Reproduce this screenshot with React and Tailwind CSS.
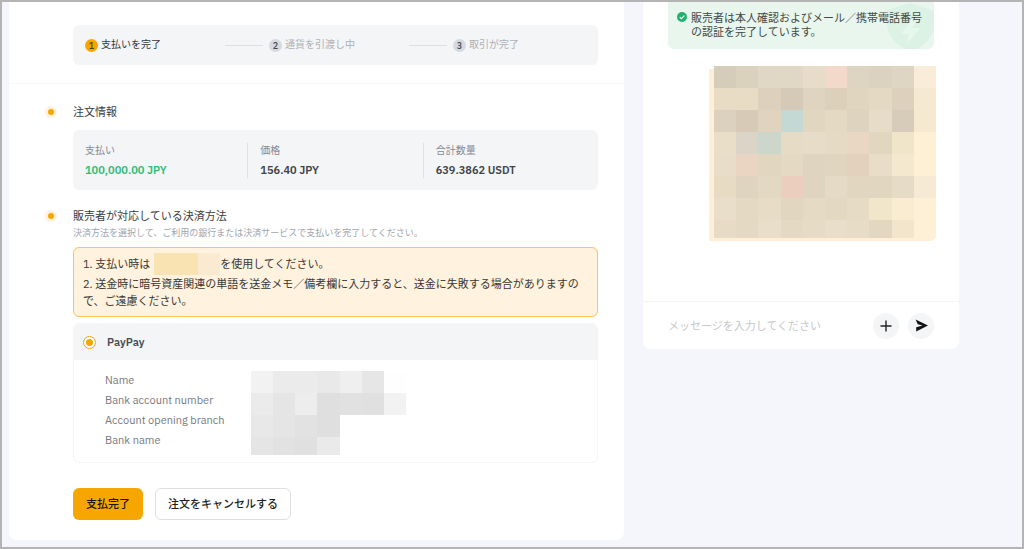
import React from 'react';

const steps = [
  { n: 1, label: '支払いを完了', active: true },
  { n: 2, label: '通貨を引渡し中' },
  { n: 3, label: '取引が完了' },
];

const amounts = [
  { label: '支払い', value: '100,000.00 JPY', tone: 'text-[#2fbd78]' },
  { label: '価格', value: '156.40 JPY', tone: 'text-[#404246]' },
  { label: '合計数量', value: '639.3862 USDT', tone: 'text-[#404246]' },
];

const qrMosaic = [
  ['#d6ccba', '#dbd2be', '#e0d7c4', '#e0d8c5', '#e7dcc8', '#f3d9c9', '#ddd4c1', '#dcd3bf', '#ded5c2', '#f9edda'],
  ['#e8dcc4', '#e8dcc4', '#ddd1bd', '#d5c9b7', '#dfd4c0', '#ddd0bb', '#e0d5be', '#e4d9c2', '#ddd1be', '#f5e9d2'],
  ['#dcd1be', '#d7cbb8', '#e0d4be', '#c4d9d4', '#e1d6c0', '#e4d9c3', '#ddd3be', '#e7dcc7', '#d7cbb9', '#f5e9d2'],
  ['#e9dec7', '#dcd5c7', '#ccd6cb', '#e6dbc4', '#e7dcc7', '#e5dac4', '#e9d6c3', '#e1d7c1', '#f0e4c9', '#fef0d5'],
  ['#e8ddc8', '#ead5c3', '#e1d6bf', '#e4dac3', '#ded4c0', '#e0d6c0', '#e3d0bd', '#e9ddc8', '#f4e8ce', '#fef0d5'],
  ['#e7dbc4', '#dfd4c0', '#e3d8c2', '#ebcebe', '#dfd4c0', '#e5dac5', '#e1d6c0', '#e1d7c1', '#e6dbc6', '#f6ead5'],
  ['#e9dec9', '#e4dac4', '#e7dcc5', '#e1d7c0', '#e5dac3', '#e3d9c2', '#e6dbc5', '#f1e5ca', '#f9ecd0', '#fef0d7'],
  ['#e7dbc5', '#e4dac3', '#e9dec9', '#e4d9c3', '#e6dbc5', '#e9dec9', '#e7dcc5', '#e3d7c2', '#f3e5cc', '#fef0d7'],
];

const accountMosaic = [
  ['#f2f2f2', '#ebebeb', '#ebebeb', '#e9e9e9', '#efefef', '#e6e6e6', '#fefefe'],
  ['#ebebeb', '#e5e5e5', '#ededed', '#dfdfdf', '#e1e1e1', '#e0e0e0', '#f2f2f2'],
  ['#e8e8e8', '#e5e5e5', '#e2e2e2', '#dfdfdf', '#ffffff', '#ffffff', '#ffffff'],
  ['#e5e5e5', '#e2e2e2', '#e0e0e0', '#eaeaea', '#ffffff', '#ffffff', '#ffffff'],
];

function Mosaic({ rows, className }) {
  return (
    <div className={`flex flex-col ${className}`} aria-hidden="true">
      {rows.map((row, y) => (
        <div key={y} className={y < rows.length - 1 ? 'flex h-[22px]' : 'flex h-[18px]'}>
          {row.map((color, x) => (
            <span key={x} className="flex-1" style={{ backgroundColor: color }} />
          ))}
        </div>
      ))}
    </div>
  );
}

function Dot() {
  return (
    <span className="grid size-3 shrink-0 place-items-center rounded-full bg-[#fff1d9]">
      <span className="size-[6px] rounded-full bg-[#f7a600]" />
    </span>
  );
}

function SectionTitle({ children }) {
  return (
    <div className="flex items-center gap-4">
      <Dot />
      <h2 className="text-[11px] leading-4 text-[#3a3c40]">{children}</h2>
    </div>
  );
}

function Steps() {
  return (
    <ol className="flex h-10 items-center rounded-md bg-[#f3f5f7] px-3">
      {steps.map((s, i) => (
        <li key={s.n} className={i < 2 ? 'flex flex-[184] items-center' : 'flex flex-[133] items-center'}>
          <span
            className={
              s.active
                ? 'grid size-[13px] place-items-center rounded-full bg-[#f7a600] text-[9px] leading-none font-medium text-[#54400f]'
                : 'grid size-[13px] place-items-center rounded-full bg-[#d5dae0] text-[9px] leading-none font-medium text-[#44474d]'
            }
          >
            {s.n}
          </span>
          <span
            className={
              s.active
                ? 'ml-[3px] flex-1 text-[10px] leading-4 whitespace-nowrap text-[#36383c]'
                : 'ml-[3px] flex-1 text-[10px] leading-4 whitespace-nowrap text-[#adb1b8]'
            }
          >
            {s.label}
          </span>
          {i < 2 && <span className="mr-[6px] h-px w-[38px] bg-[#dcdfe3]" />}
        </li>
      ))}
    </ol>
  );
}

function OrderPanel() {
  return (
    <main className="rounded-b-lg bg-white pb-5">
      <div className="border-b border-[#f5f6f7] pt-[23px] pr-[26px] pb-[18px] pl-16">
        <Steps />
      </div>

      <section className="pt-5 pr-[26px] pl-9">
        <SectionTitle>注文情報</SectionTitle>
        <dl className="mt-[10px] ml-7 flex h-[60px] items-center rounded-md bg-[#f3f5f7]">
          {amounts.map((a, i) => (
            <div key={a.label} className={i ? 'flex-1 border-l border-[#dfe1e5] pl-3' : 'flex-1 pl-3'}>
              <dt className="text-[10px] leading-4 text-[#868a93]">{a.label}</dt>
              <dd className={`pt-[3px] text-[11px] leading-4 font-semibold ${a.tone}`}>{a.value}</dd>
            </div>
          ))}
        </dl>
      </section>

      <section className="pt-[18px] pr-[26px] pl-9">
        <SectionTitle>販売者が対応している決済方法</SectionTitle>
        <div className="ml-7">
          <p className="text-[9px] leading-[18px] text-[#a0a4ad]">
            決済方法を選択して、ご利用の銀行または決済サービスで支払いを完了してください。
          </p>
          <ol className="mt-[5px] rounded-md border border-[#f9c45c] bg-[#fff2de] px-[9px] pt-[5px] pb-[6px] text-[11px] leading-[17px] text-[#3a3732]">
            <li className="mb-px flex h-[22px] items-center">
              <span>1. 支払い時は</span>
              <span className="ml-1 flex h-[22px] w-[66px]" aria-hidden="true">
                <span className="flex-1 bg-[#fae3b3]" />
                <span className="flex-1 bg-[#fae3b3]" />
                <span className="flex-1 bg-[#f9ead1]" />
              </span>
              <span>を使用してください。</span>
            </li>
            <li>2. 送金時に暗号資産関連の単語を送金メモ／備考欄に入力すると、送金に失敗する場合がありますので、ご遠慮ください。</li>
          </ol>

          <div className="mt-[6px] overflow-hidden rounded-md border border-[#f3f5f7]">
            <label className="flex h-9 items-center gap-[11px] bg-[#f3f5f7] px-[9px] text-[11px] leading-4 font-semibold text-[#4a4d52]">
              <input
                type="radio"
                name="method"
                defaultChecked
                className="size-[13px] appearance-none rounded-full border border-[#f7a600] bg-white bg-[radial-gradient(circle,#f7a600_3px,#ffffff_4px)]"
              />
              PayPay
            </label>
            <div className="flex h-[102px] items-start gap-[26px] pt-[10px] pl-[31px]">
              <ul className="w-[120px] text-[11px] leading-5 whitespace-nowrap text-[#77797d]">
                <li>Name</li>
                <li>Bank account number</li>
                <li>Account opening branch</li>
                <li>Bank name</li>
              </ul>
              <Mosaic rows={accountMosaic} className="mt-px w-[155px]" />
            </div>
          </div>

          <div className="mt-[25px] flex gap-3">
            <button type="button" className="h-8 rounded-md bg-[#f7a600] px-[13px] text-[11px] font-medium text-[#1c1404]">
              支払完了
            </button>
            <button type="button" className="h-8 rounded-md border border-[#dddfe2] bg-white px-3 text-[11px] font-medium text-[#1d1e20]">
              注文をキャンセルする
            </button>
          </div>
        </div>
      </section>
    </main>
  );
}

function ChatPanel() {
  return (
    <aside className="rounded-b-lg bg-white">
      <div className="relative mr-[25px] ml-[25px] overflow-hidden rounded-b-md bg-[#e8f6ed] pt-[9px] pb-[10px]">
        <svg className="absolute right-0 bottom-0 h-[46px] w-[47px]" viewBox="0 0 47 46" aria-hidden="true">
          <path d="M23 0 L44 7 L47 8 V24 C46 34 37 43 25 49 C10 43 0 34 0 20 V7 Z" fill="#dbf2e5" />
          <path d="M24 17 L14 31 H22 L20 41 L33 25 H25 L29 17 Z" fill="#e8f7ee" />
        </svg>
        <div className="relative flex gap-1 pr-[9px] pl-[9px]">
          <svg className="mt-px size-[10px] shrink-0" viewBox="0 0 10 10" aria-hidden="true">
            <circle cx="5" cy="5" r="5" fill="#20b26c" />
            <path d="M2.7 5.1 L4.4 6.7 L7.4 3.7" fill="none" stroke="#fff" strokeWidth="1.2" />
          </svg>
          <p className="text-[11px] leading-[14px] text-[#434a47]">
            販売者は本人確認およびメール／携帯電話番号の認証を完了しています。
          </p>
        </div>
      </div>

      <div className="mt-[17px] mr-[23px] ml-[66px] rounded-br-md bg-[linear-gradient(#ffffff_3px,#fef0d7_3px)] pb-[3px] pl-[5px]">
        <Mosaic rows={qrMosaic} className="w-full" />
      </div>

      <form className="mt-[60px] flex h-12 items-center border-t border-[#f3f4f6] pr-[25px] pl-[25px]" onSubmit={(e) => e.preventDefault()}>
        <input
          type="text"
          aria-label="メッセージを入力してください"
          placeholder="メッセージを入力してください"
          className="min-w-0 flex-1 text-[11px] leading-4 outline-none placeholder:text-[#c6c8cb]"
        />
        <button type="button" aria-label="追加" className="grid size-[26px] place-items-center rounded-full bg-[#f3f5f7]">
          <svg className="size-3" viewBox="0 0 12 12" aria-hidden="true">
            <path d="M6 .5 V11.5 M.5 6 H11.5" stroke="#222427" strokeWidth="1.4" />
          </svg>
        </button>
        <button type="submit" aria-label="送信" className="ml-[9px] grid size-[26px] place-items-center rounded-full bg-[#f3f5f7]">
          <svg className="size-[13px]" viewBox="0 0 13 13" aria-hidden="true">
            <path d="M.6 .4 L13 6.4 L1.2 12.6 L1.2 8.2 L7.6 6.6 L2.8 5.2 Z" fill="#111315" />
          </svg>
        </button>
      </form>
    </aside>
  );
}

export default function App() {
  return (
    <div className="min-h-screen border-2 border-[#b4b4b4] bg-[#f5f6fb] pr-[63px] pb-[7px] pl-[7px] font-['IBM_Plex_Sans','Noto_Sans','Noto_Sans_CJK_JP',sans-serif]">
      <div className="grid grid-cols-[615fr_316fr] items-start gap-[19px]">
        <OrderPanel />
        <ChatPanel />
      </div>
    </div>
  );
}
